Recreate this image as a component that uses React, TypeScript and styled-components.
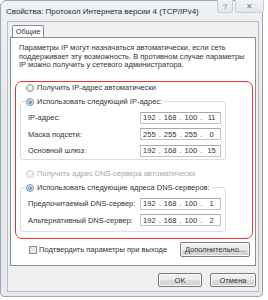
import React from 'react'
import styled, { createGlobalStyle, css } from 'styled-components'

const GlobalStyle = createGlobalStyle`
  html, body {
    margin: 0;
    padding: 0;
    background: #ffffff;
  }
  body {
    font-family: "Liberation Sans", Arial, sans-serif;
    color: #333333;
  }
`

const Window = styled.div`
  width: 263px;
  height: 297px;
  box-sizing: border-box;
  border: 1px solid #9ea6b0;
  border-radius: 6px 6px 4px 4px;
  background: linear-gradient(#eef1f5, #e3e8ed 40%, #e6eaee);
  display: flex;
  flex-direction: column;
`

const TitleBar = styled.div`
  height: 20px;
  display: flex;
  align-items: center;
  padding-left: 5px;
  font-size: 8px;
  color: #2a2a2a;
  flex-shrink: 0;
`

const TitleButtons = styled.div`
  margin-left: auto;
  align-self: flex-start;
  display: flex;
  gap: 2px;
  margin-top: -1px;
  margin-right: -2px;
`

const TitleButton = styled.div<{ $w: number }>`
  width: ${(p) => p.$w}px;
  height: 13px;
  box-sizing: border-box;
  border: 1px solid #c9ced5;
  border-top: none;
  border-radius: 0 0 3px 3px;
  display: flex;
  align-items: center;
  justify-content: center;
  color: #7a8088;
  font-size: 8px;
  background: linear-gradient(#f1f3f6, #e2e6eb);
`

const Client = styled.div`
  flex: 1;
  margin: 0 3px 4px 6px;
  background: #f0f0f0;
  border: 1px solid #b9bec5;
  padding: 3px 2px 0 2px;
  display: flex;
  flex-direction: column;
`

const TabStrip = styled.div`
  display: flex;
  height: 12px;
  padding-left: 2px;
`

const Tab = styled.div`
  position: relative;
  z-index: 1;
  width: 32px;
  height: 12px;
  box-sizing: border-box;
  border: 1px solid #898c95;
  border-bottom: none;
  border-radius: 2px 2px 0 0;
  background: #ffffff;
  font-size: 7.5px;
  display: flex;
  align-items: center;
  justify-content: center;
  margin-bottom: -1px;
`

const TabPanel = styled.div`
  position: relative;
  height: 229px;
  box-sizing: border-box;
  border: 1px solid #898c95;
  background: #ffffff;
  padding: 6px 0 0 8px;
  display: flex;
  flex-direction: column;
`

const Highlight = styled.div`
  position: absolute;
  left: 4px;
  top: 43px;
  width: 238px;
  height: 158px;
  box-sizing: border-box;
  border: 1.5px solid #e8323c;
  border-radius: 7px;
  pointer-events: none;
`

const Description = styled.div`
  font-size: 7.5px;
  line-height: 8.5px;
`

const OptionRow = styled.div<{ $top?: number; $disabled?: boolean }>`
  display: flex;
  align-items: center;
  gap: 3px;
  height: 12px;
  margin-top: ${(p) => p.$top ?? 0}px;
  margin-left: 7px;
  font-size: 7.5px;
  color: ${(p) => (p.$disabled ? '#a8a8a8' : '#333333')};
`

const Radio = styled.span<{ $checked?: boolean; $disabled?: boolean }>`
  width: 8px;
  height: 8px;
  box-sizing: border-box;
  border-radius: 50%;
  border: 1px solid ${(p) => (p.$disabled ? '#c9c9c9' : '#8d8f91')};
  background: ${(p) =>
    p.$disabled
      ? '#f4f4f4'
      : 'radial-gradient(circle at 50% 40%, #ffffff, #dcdcdc)'};
  display: inline-flex;
  align-items: center;
  justify-content: center;
  flex-shrink: 0;
  ${(p) =>
    p.$checked &&
    css`
      &::after {
        content: '';
        width: 4px;
        height: 4px;
        border-radius: 50%;
        background: radial-gradient(circle at 40% 35%, #8fd0f5, #2a6ea8);
      }
    `}
`

const GroupBox = styled.fieldset<{ $top: number; $bottom: number }>`
  margin: ${(p) => p.$top}px 0 0 1px;
  width: 206px;
  box-sizing: border-box;
  border: 1px solid #d5dfe5;
  border-radius: 3px;
  padding: 4px 4px ${(p) => p.$bottom}px 7px;
  display: flex;
  flex-direction: column;
  gap: 4.5px;
  min-width: 0;
`

const Legend = styled.legend`
  padding: 0 2px 0 0;
  margin-left: -2px;
  height: 12px;
  display: flex;
  align-items: center;
  gap: 3px;
  font-size: 7.5px;
  background: #ffffff;
`

const FieldRow = styled.div`
  display: flex;
  align-items: center;
  justify-content: space-between;
  height: 12px;
  font-size: 7.5px;
`

const IpBox = styled.div`
  width: 81px;
  height: 12px;
  box-sizing: border-box;
  border: 1px solid #c0c3c8;
  border-top-color: #a6aab0;
  background: #ffffff;
  display: flex;
  align-items: center;
  font-size: 7.5px;
  color: #333333;
`

const Seg = styled.span`
  flex: 1;
  text-align: center;
`

const Dot = styled.span`
  width: 4px;
  text-align: center;
`

const BottomRow = styled.div`
  display: flex;
  align-items: center;
  justify-content: space-between;
  margin-top: 10px;
  padding-right: 5px;
  font-size: 7.5px;
`

const CheckLabel = styled.label`
  display: flex;
  align-items: center;
  gap: 2px;
  margin-left: 10px;
`

const Checkbox = styled.span`
  width: 8px;
  height: 8px;
  box-sizing: border-box;
  border: 1px solid #8d8f91;
  background: linear-gradient(135deg, #dcdcdc, #f7f7f7);
`

const Button = styled.button<{ $w: number; $h: number }>`
  width: ${(p) => p.$w}px;
  height: ${(p) => p.$h}px;
  box-sizing: border-box;
  padding: 0;
  border: 1px solid #7a7a7a;
  border-radius: 2px;
  background: linear-gradient(#f2f2f2 0%, #ebebeb 50%, #dddddd 51%, #cfcfcf 100%);
  box-shadow: inset 0 0 0 1px #fbfbfb;
  font-family: "Liberation Sans", Arial, sans-serif;
  font-size: 7.5px;
  color: #333333;
`

const DialogButtons = styled.div`
  display: flex;
  justify-content: flex-end;
  gap: 8px;
  margin-top: 7px;
`

const Ip = ({ parts }: { parts: string[] }) => (
  <IpBox>
    {parts.map((p, i) => (
      <React.Fragment key={i}>
        <Seg>{p}</Seg>
        {i < 3 && <Dot>.</Dot>}
      </React.Fragment>
    ))}
  </IpBox>
)

export default function App() {
  return (
    <>
      <GlobalStyle />
      <Window>
        <TitleBar>
          Свойства: Протокол Интернета версии 4 (TCP/IPv4)
          <TitleButtons>
            <TitleButton $w={16}>?</TitleButton>
            <TitleButton $w={29}>✕</TitleButton>
          </TitleButtons>
        </TitleBar>
        <Client>
          <TabStrip>
            <Tab>Общие</Tab>
          </TabStrip>
          <TabPanel>
            <Description>
              Параметры IP могут назначаться автоматически, если сеть
              <br />
              поддерживает эту возможность. В противном случае параметры
              <br />
              IP можно получить у сетевого администратора.
            </Description>
            <OptionRow $top={12}>
              <Radio />
              Получить IP-адрес автоматически
            </OptionRow>
            <GroupBox $top={2} $bottom={2}>
              <Legend>
                <Radio $checked />
                Использовать следующий IP-адрес:
              </Legend>
              <FieldRow>
                IP-адрес:
                <Ip parts={['192', '168', '100', '11']} />
              </FieldRow>
              <FieldRow>
                Маска подсети:
                <Ip parts={['255', '255', '255', '0']} />
              </FieldRow>
              <FieldRow>
                Основной шлюз:
                <Ip parts={['192', '168', '100', '15']} />
              </FieldRow>
            </GroupBox>
            <OptionRow $top={8} $disabled>
              <Radio $disabled />
              Получить адрес DNS-сервера автоматически
            </OptionRow>
            <GroupBox $top={2} $bottom={5}>
              <Legend>
                <Radio $checked />
                Использовать следующие адреса DNS-серверов:
              </Legend>
              <FieldRow>
                Предпочитаемый DNS-сервер:
                <Ip parts={['192', '168', '100', '1']} />
              </FieldRow>
              <FieldRow>
                Альтернативный DNS-сервер:
                <Ip parts={['192', '168', '100', '2']} />
              </FieldRow>
            </GroupBox>
            <BottomRow>
              <CheckLabel>
                <Checkbox />
                Подтвердить параметры при выходе
              </CheckLabel>
              <Button $w={70} $h={15}>Дополнительно...</Button>
            </BottomRow>
            <Highlight />
          </TabPanel>
          <DialogButtons>
            <Button $w={44} $h={14}>OK</Button>
            <Button $w={46} $h={14}>Отмена</Button>
          </DialogButtons>
        </Client>
      </Window>
    </>
  )
}
